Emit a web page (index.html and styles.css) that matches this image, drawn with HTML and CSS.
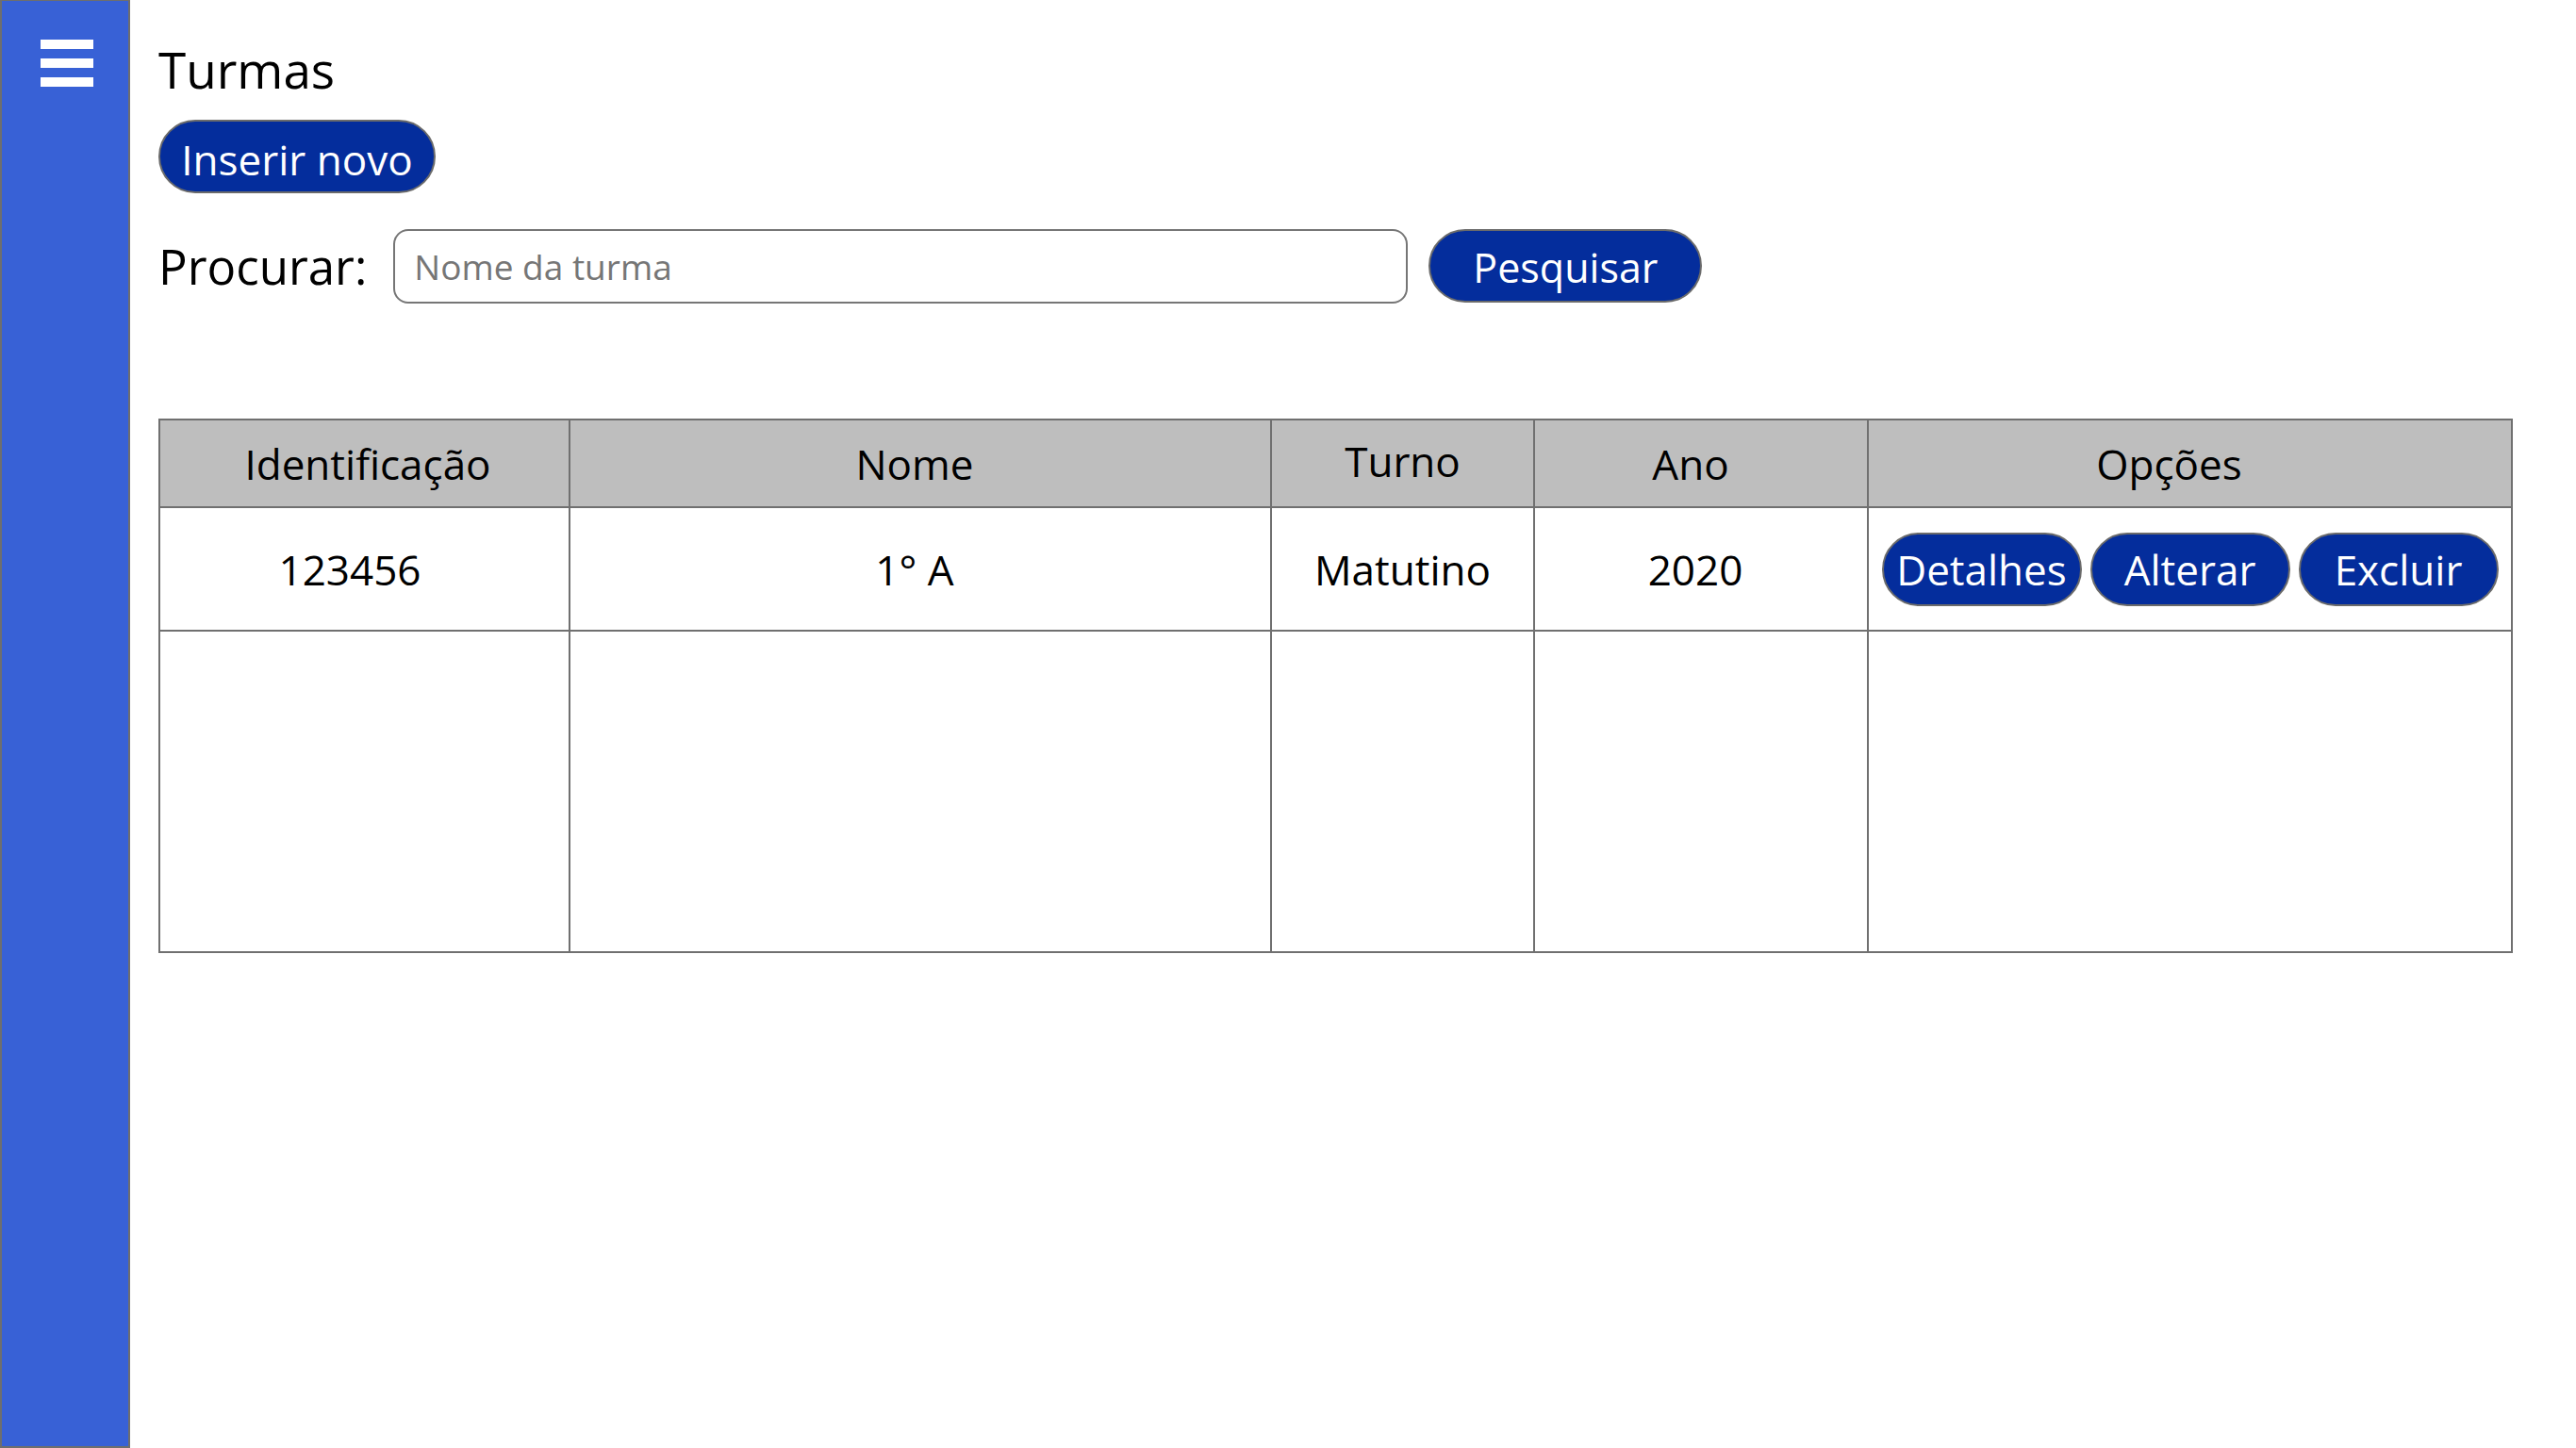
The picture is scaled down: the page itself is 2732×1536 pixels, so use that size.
FILE: index.html
```html
<!DOCTYPE html>
<html lang="pt-BR">
<head>
<meta charset="utf-8">
<title>Turmas</title>
<link rel="stylesheet" href="styles.css">
</head>
<body>
<div class="app">
  <aside class="sidebar">
    <div class="menu" aria-label="Menu"><span></span><span></span><span></span></div>
  </aside>
  <main class="content">
    <h1 class="title">Turmas</h1>
    <button class="btn btn-insert">Inserir novo</button>
    <div class="search">
      <label class="search-label" for="q">Procurar:</label>
      <input id="q" class="search-input" type="text" placeholder="Nome da turma">
      <button class="btn btn-search">Pesquisar</button>
    </div>
    <table class="grid">
      <colgroup>
        <col class="c-id"><col class="c-nome"><col class="c-turno"><col class="c-ano"><col class="c-opc">
      </colgroup>
      <thead>
        <tr>
          <th class="th-id">Identificação</th>
          <th class="th-nome">Nome</th>
          <th class="th-turno">Turno</th>
          <th class="th-ano">Ano</th>
          <th class="th-opc">Opções</th>
        </tr>
      </thead>
      <tbody>
        <tr class="row-data">
          <td class="td-id">123456</td>
          <td class="td-nome">1° A</td>
          <td>Matutino</td>
          <td class="td-ano">2020</td>
          <td>
            <div class="actions">
              <button class="btn btn-sm">Detalhes</button>
              <button class="btn btn-sm">Alterar</button>
              <button class="btn btn-sm">Excluir</button>
            </div>
          </td>
        </tr>
        <tr class="row-empty"><td></td><td></td><td></td><td></td><td></td></tr>
      </tbody>
    </table>
  </main>
</div>
</body>
</html>
```
FILE: styles.css
```css
html, body {
  margin: 0;
  padding: 0;
  background: #ffffff;
}
body {
  font-family: "Open Sans", "Noto Sans", "Liberation Sans", sans-serif;
  color: #000000;
}
.app {
  display: flex;
  height: 1536px;
}
.sidebar {
  flex: none;
  width: 138px;
  box-sizing: border-box;
  background: #3861d6;
  border: 2px solid #6e6e6e;
  border-top-width: 1px;
  padding: 41px 0 0 41px;
}
.menu {
  display: flex;
  flex-direction: column;
  gap: 10px;
}
.menu span {
  display: block;
  width: 56px;
  height: 10px;
  background: #ffffff;
}
.content {
  flex: 1;
  padding: 44px 0 0 30px;
  display: flex;
  flex-direction: column;
  align-items: flex-start;
}
.title {
  margin: 0;
  font-size: 53px;
  font-weight: 400;
  line-height: 60px;
}
.btn {
  font-family: inherit;
  box-sizing: border-box;
  height: 78px;
  border: 2px solid #6b6b6b;
  border-radius: 40px;
  background: #042d9c;
  color: #ffffff;
  font-size: 44px;
  line-height: 1;
  display: inline-flex;
  align-items: center;
  justify-content: center;
  padding: 0;
  cursor: pointer;
}
.btn-insert {
  margin-top: 23px;
  width: 294px;
  padding-top: 5px;
}
.search {
  margin-top: 37px;
  height: 80px;
  display: flex;
  align-items: center;
}
.search-label {
  font-size: 51px;
  line-height: 1;
  margin-right: 28px;
}
.search-input {
  box-sizing: border-box;
  width: 1076px;
  height: 79px;
  border: 2px solid #767676;
  border-radius: 16px;
  padding: 0 0 0 20px;
  font-family: inherit;
  font-size: 37px;
  color: #000000;
  outline: none;
}
.search-input::placeholder {
  color: #767676;
  opacity: 1;
}
.btn-search {
  margin-left: 22px;
  width: 290px;
  font-size: 43px;
  padding-top: 2px;
}
.grid {
  margin-top: 122px;
  width: 2495px;
  table-layout: fixed;
  border-collapse: collapse;
  border: 2px solid #707070;
}
.c-id { width: 435px; }
.c-nome { width: 744px; }
.c-turno { width: 279px; }
.c-ano { width: 354px; }
.c-opc { width: 683px; }
.grid th,
.grid td {
  border: 2px solid #707070;
  padding: 0;
  text-align: center;
  vertical-align: middle;
  font-size: 44px;
  font-weight: 400;
}
.grid th {
  background: #bebebe;
  height: 91px;
}
.grid .th-id { padding-left: 7px; }
.grid .th-nome { padding-right: 12px; }
.grid .th-turno { height: 86px; padding-bottom: 5px; }
.grid .th-ano { padding-right: 22px; }
.grid .th-opc { padding-right: 44px; }
.grid .td-id { padding-right: 31px; }
.grid .td-nome { padding-right: 12px; }
.grid .td-ano { padding-right: 12px; }
.row-data td {
  height: 129px;
}
.row-empty td {
  height: 339px;
}
.actions {
  display: flex;
  justify-content: center;
  gap: 9px;
}
.btn-sm {
  width: 212px;
}
```
